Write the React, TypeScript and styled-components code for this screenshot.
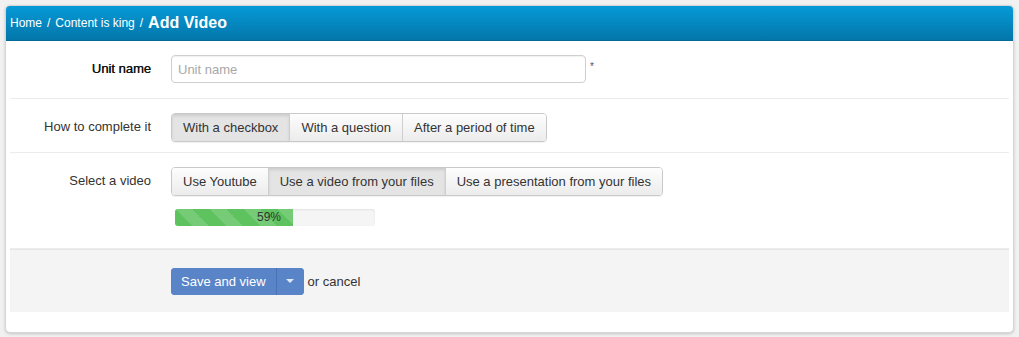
import React from "react"
import styled, { createGlobalStyle } from "styled-components"

const Global = createGlobalStyle`
  html, body { margin: 0; padding: 0; background: #f1f1f1; }
  body { font-family: "Liberation Sans", Arial, sans-serif; font-size: 13px; color: #333; }
  * { box-sizing: border-box; }
`

const Page = styled.div`
  padding: 5px 5px 6px 5px;
`

const Panel = styled.div`
  background: #fff;
  border: 1px solid #d6d6d6;
  border-radius: 5px;
  box-shadow: 0 1px 3px rgba(0, 0, 0, 0.18);
  overflow: hidden;
`

const Header = styled.div`
  height: 35px;
  display: flex;
  align-items: center;
  gap: 5px;
  padding: 0 4px;
  color: #fff;
  background: linear-gradient(#069ad8, #0376a9);
  border-bottom: 1px solid #026a98;
  font-size: 12px;
`

const Crumb = styled.span`
  color: #fff;
`

const Title = styled.span`
  font-size: 16px;
  font-weight: bold;
`

const Body = styled.div`
  padding: 0 4px 20px 4px;
`

const Row = styled.div<{ $h: number }>`
  display: grid;
  grid-template-columns: 141px 1fr;
  column-gap: 20px;
  min-height: ${(p) => p.$h}px;
  padding-top: 14px;
  border-bottom: 1px solid #ececec;
`

const Label = styled.label<{ $strong?: boolean }>`
  text-align: right;
  line-height: 28px;
  color: ${(p) => (p.$strong ? "#111" : "#333")};
  text-shadow: ${(p) => (p.$strong ? "0.3px 0 0 #111" : "none")};
`

const Field = styled.div`
  display: flex;
  flex-direction: column;
  gap: 13px;
`

const InputLine = styled.div`
  display: flex;
  align-items: flex-start;
  gap: 4px;
`

const Input = styled.input`
  width: 415px;
  height: 28px;
  border: 1px solid #cfcfcf;
  border-radius: 4px;
  padding: 0 6px;
  font: inherit;
  color: #333;
  box-shadow: inset 0 1px 1px rgba(0, 0, 0, 0.06);
  &::placeholder { color: #a8a8a8; }
`

const Star = styled.span`
  font-size: 10px;
  color: #555;
  line-height: 24px;
`

const Group = styled.div`
  display: inline-flex;
  align-self: flex-start;
  border: 1px solid #c9c9c9;
  border-radius: 4px;
  overflow: hidden;
  box-shadow: 0 1px 1px rgba(0, 0, 0, 0.06);
`

const SegBtn = styled.button<{ $active?: boolean }>`
  height: 27px;
  padding: 0 11px;
  border: 0;
  border-left: 1px solid #cfcfcf;
  font: inherit;
  color: #333;
  background: ${(p) =>
    p.$active ? "#e4e4e4" : "linear-gradient(#fdfdfd, #ececec)"};
  box-shadow: ${(p) => (p.$active ? "inset 0 2px 3px rgba(0,0,0,0.1)" : "none")};
  &:first-child { border-left: 0; }
`

const Progress = styled.div`
  width: 200px;
  height: 17px;
  margin-left: 4px;
  border-radius: 3px;
  background: #f5f5f5;
  box-shadow: inset 0 1px 2px rgba(0, 0, 0, 0.08);
  overflow: hidden;
`

const Fill = styled.div`
  height: 100%;
  background-color: #5ec35e;
  background-image: linear-gradient(
    45deg,
    rgba(255, 255, 255, 0.15) 25%,
    transparent 25%,
    transparent 50%,
    rgba(255, 255, 255, 0.15) 50%,
    rgba(255, 255, 255, 0.15) 75%,
    transparent 75%,
    transparent
  );
  background-size: 34px 34px;
  color: #333;
  font-size: 12px;
  line-height: 17px;
  text-align: right;
  padding-right: 12px;
`

const Footer = styled.div`
  background: #f4f4f4;
  border-top: 1px solid #e6e6e6;
  height: 63px;
  display: flex;
  align-items: center;
  padding-left: 161px;
  gap: 4px;
`

const Split = styled.div`
  display: inline-flex;
  height: 27px;
  border-radius: 4px;
  overflow: hidden;
  background: #5a84c8;
`

const Primary = styled.button`
  border: 0;
  background: #5a84c8;
  color: #fff;
  font: inherit;
  padding: 0 10px;
  border-right: 1px solid #4a72b4;
`

const Caret = styled.button`
  width: 27px;
  border: 0;
  background: #5a84c8;
  display: flex;
  align-items: center;
  justify-content: center;
  &::after {
    content: "";
    border-left: 4px solid transparent;
    border-right: 4px solid transparent;
    border-top: 4px solid #dfe8f6;
  }
`

const Cancel = styled.span`
  color: #333;
`

export default function App() {
  const pct = 59
  return (
    <>
      <Global />
      <Page>
        <Panel>
          <Header>
            <Crumb>Home</Crumb>/<Crumb>Content is king</Crumb>/<Title>Add Video</Title>
          </Header>
          <Body>
            <Row $h={58}>
              <Label $strong>Unit name</Label>
              <InputLine>
                <Input placeholder="Unit name" />
                <Star>*</Star>
              </InputLine>
            </Row>
            <Row $h={54}>
              <Label>How to complete it</Label>
              <Field>
                <Group>
                  <SegBtn $active>With a checkbox</SegBtn>
                  <SegBtn>With a question</SegBtn>
                  <SegBtn>After a period of time</SegBtn>
                </Group>
              </Field>
            </Row>
            <Row $h={96}>
              <Label>Select a video</Label>
              <Field>
                <Group>
                  <SegBtn>Use Youtube</SegBtn>
                  <SegBtn $active>Use a video from your files</SegBtn>
                  <SegBtn>Use a presentation from your files</SegBtn>
                </Group>
                <Progress>
                  <Fill style={{ width: `${pct}%` }}>{pct}%</Fill>
                </Progress>
              </Field>
            </Row>
            <Footer>
              <Split>
                <Primary>Save and view</Primary>
                <Caret />
              </Split>
              <Cancel>or cancel</Cancel>
            </Footer>
          </Body>
        </Panel>
      </Page>
    </>
  )
}
